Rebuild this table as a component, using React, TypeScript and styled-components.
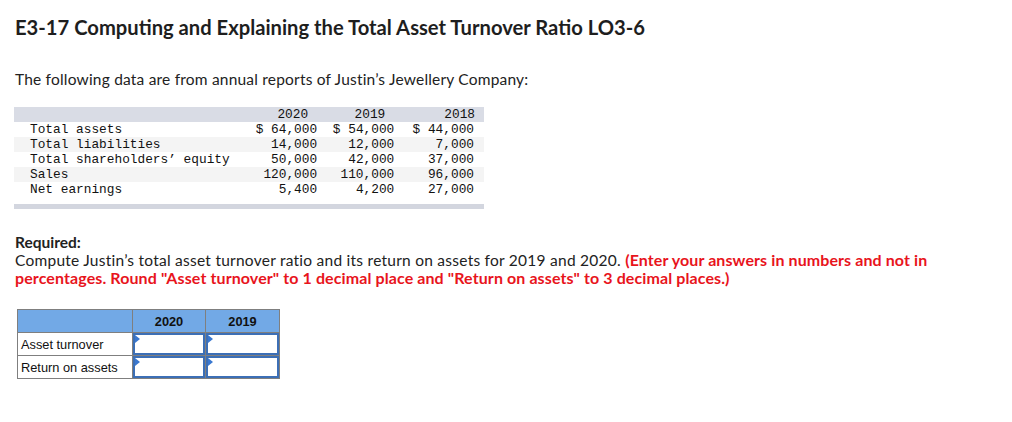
import styled, { createGlobalStyle } from "styled-components";

const GlobalStyle = createGlobalStyle`
  html, body {
    margin: 0;
    padding: 0;
    background: #ffffff;
  }
`;

const Page = styled.div`
  width: 1012px;
  height: 422px;
  padding: 14px 15px 0;
  box-sizing: border-box;
  font-family: Lato, "Open Sans", sans-serif;
  color: #222222;
`;

const Title = styled.h1`
  margin: 0;
  font-size: 20.2px;
  line-height: 26px;
  font-weight: 700;
  color: #1e1e1e;
`;

const Intro = styled.p`
  margin: 29px 0 0;
  font-size: 15.5px;
  letter-spacing: 0.2px;
  line-height: 20px;
`;

const DataTable = styled.table`
  margin: 18px 0 0 -1px;
  width: 470px;
  border-collapse: collapse;
  font-family: "Courier New", "Liberation Mono", monospace;
  font-size: 12.8px;
  color: #111111;
`;

const HeadRow = styled.tr`
  background: #d9dce5;
  height: 15px;
`;

const Row = styled.tr<{ $shade?: boolean }>`
  background: ${(p) => (p.$shade ? "#f4f4f4" : "#ffffff")};
  height: 15px;
`;

const FootCell = styled.td`
  height: 7px;
  padding: 0;
  border-bottom: 5px solid #d3d6df;
`;

const YearCell = styled.th`
  padding: 0 9px 0 0;
  font-weight: 400;
  text-align: right;
  line-height: 15px;
`;

const LabelCell = styled.td`
  padding: 0 0 0 16px;
  width: 210px;
  line-height: 15px;
  white-space: pre;
`;

const NumCell = styled.td<{ $last?: boolean }>`
  padding: 0 ${(p) => (p.$last ? "10px" : "0")} 0 0;
  text-align: right;
  line-height: 15px;
  white-space: pre;
`;

const Required = styled.div`
  margin-top: 24px;
  max-width: 930px;
  font-size: 15.5px;
  letter-spacing: 0.25px;
  line-height: 18px;
`;

const ReqLabel = styled.div`
  font-weight: 700;
  letter-spacing: 0;
`;

const Red = styled.span`
  color: #e8141c;
  font-weight: 700;
  font-size: 16px;
  letter-spacing: 0.1px;
  line-height: 18px;
`;

const AnswerTable = styled.table`
  margin: 22px 0 0 2px;
  border-collapse: collapse;
  font-family: "Liberation Sans", Arial, sans-serif;
  font-size: 12.8px;
  color: #111111;
`;

const AnswerHead = styled.th<{ $w: number }>`
  width: ${(p) => p.$w}px;
  height: 22px;
  padding: 0;
  background: #72a9e6;
  border: 1px solid #7f7f7f;
  font-weight: 700;
  text-align: center;
`;

const AnswerLabel = styled.td`
  height: 22px;
  padding: 0 0 0 3px;
  border: 1px solid #7f7f7f;
`;

const AnswerCell = styled.td`
  padding: 0;
  border: 1px solid #7f7f7f;
`;

const InputBox = styled.div`
  position: relative;
  height: 22px;
  box-sizing: border-box;
  border: 2px solid #3c6fb6;
  background: #ffffff;
`;

const Marker = styled.span`
  position: absolute;
  left: 0;
  top: 0;
  width: 0;
  height: 0;
  border-top: 4px solid transparent;
  border-bottom: 4px solid transparent;
  border-left: 5px solid #3a78d0;
`;

const rows: [string, string, string, string][] = [
  ["Total assets", "$ 64,000", "$ 54,000", "$ 44,000"],
  ["Total liabilities", "14,000", "12,000", "7,000"],
  ["Total shareholders\u2019 equity", "50,000", "42,000", "37,000"],
  ["Sales", "120,000", "110,000", "96,000"],
  ["Net earnings", "5,400", "4,200", "27,000"],
];

function App() {
  return (
    <>
      <GlobalStyle />
      <Page>
        <Title>E3-17 Computing and Explaining the Total Asset Turnover Ratio LO3-6</Title>
        <Intro>The following data are from annual reports of Justin’s Jewellery Company:</Intro>

        <DataTable>
          <tbody>
            <HeadRow>
              <th />
              <YearCell>2020</YearCell>
              <YearCell>2019</YearCell>
              <YearCell>2018</YearCell>
            </HeadRow>
            {rows.map((r, i) => (
              <Row key={r[0]} $shade={i % 2 === 1}>
                <LabelCell>{r[0]}</LabelCell>
                <NumCell>{r[1]}</NumCell>
                <NumCell>{r[2]}</NumCell>
                <NumCell $last>{r[3]}</NumCell>
              </Row>
            ))}
            <tr>
              <FootCell colSpan={4} />
            </tr>
          </tbody>
        </DataTable>

        <Required>
          <ReqLabel>Required:</ReqLabel>
          Compute Justin’s total asset turnover ratio and its return on assets for 2019 and 2020.{" "}
          <Red>
            (Enter your answers in numbers and not in percentages. Round "Asset turnover" to 1 decimal
            place and "Return on assets" to 3 decimal places.)
          </Red>
        </Required>

        <AnswerTable>
          <thead>
            <tr>
              <AnswerHead $w={114} />
              <AnswerHead $w={72}>2020</AnswerHead>
              <AnswerHead $w={73}>2019</AnswerHead>
            </tr>
          </thead>
          <tbody>
            {["Asset turnover", "Return on assets"].map((label) => (
              <tr key={label}>
                <AnswerLabel>{label}</AnswerLabel>
                <AnswerCell>
                  <InputBox>
                    <Marker />
                  </InputBox>
                </AnswerCell>
                <AnswerCell>
                  <InputBox>
                    <Marker />
                  </InputBox>
                </AnswerCell>
              </tr>
            ))}
          </tbody>
        </AnswerTable>
      </Page>
    </>
  );
}

export default App;
